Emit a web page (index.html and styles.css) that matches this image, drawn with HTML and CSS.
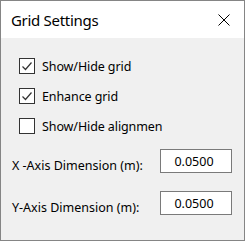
FILE: index.html
```html
<!DOCTYPE html>
<html lang="en">
<head>
    <meta charset="UTF-8">
    <meta name="viewport" content="width=device-width, initial-scale=1.0">
    <title>Grid Settings</title>
    <link rel="stylesheet" href="styles.css">
</head>
<body>
    <div class="window">
        <div class="titlebar">
            <span class="title">Grid Settings</span>
            <svg class="close" width="12" height="12" viewBox="0 0 12 12">
                <path d="M0.5 0.5 L11.5 11.5 M11.5 0.5 L0.5 11.5" stroke="#000" stroke-width="1" fill="none"/>
            </svg>
        </div>
        <div class="content">
            <div class="checks">
                <label class="check">
                    <span class="box">
                        <svg width="14" height="14" viewBox="0 0 14 14"><path d="M2.5 7.5 L5.5 10.5 L11.5 3.5" stroke="#333" stroke-width="1.2" fill="none"/></svg>
                    </span>
                    Show/Hide grid
                </label>
                <label class="check">
                    <span class="box">
                        <svg width="14" height="14" viewBox="0 0 14 14"><path d="M2.5 7.5 L5.5 10.5 L11.5 3.5" stroke="#333" stroke-width="1.2" fill="none"/></svg>
                    </span>
                    Enhance grid
                </label>
                <label class="check">
                    <span class="box"></span>
                    Show/Hide alignmen
                </label>
            </div>
            <div class="fields">
                <div class="field">
                    <span class="field-label">X -Axis Dimension (m):</span>
                    <span class="input">0.0500</span>
                </div>
                <div class="field">
                    <span class="field-label">Y-Axis Dimension (m):</span>
                    <span class="input">0.0500</span>
                </div>
            </div>
        </div>
    </div>
</body>
</html>
```

FILE: styles.css
```css
body {
    margin: 0;
    padding: 0;
    font-family: 'Noto Sans', 'Liberation Sans', sans-serif;
    color: #000;
    background-color: #f0f0f0;
}
.window {
    width: 245px;
    height: 241px;
    box-sizing: border-box;
    border: 1px solid #858585;
    background-color: #f0f0f0;
    display: flex;
    flex-direction: column;
}
.titlebar {
    height: 37px;
    background-color: #fff;
    display: flex;
    align-items: center;
    justify-content: space-between;
    padding: 0 14px 0 10px;
}
.title {
    font-size: 15px;
    letter-spacing: -0.3px;
}
.close {
    display: block;
}
.content {
    padding: 20px 12px 0 11px;
}
.checks {
    display: flex;
    flex-direction: column;
    gap: 14px;
    margin-left: 7px;
}
.check {
    display: flex;
    align-items: center;
    gap: 7px;
    height: 16px;
    font-size: 12.5px;
    letter-spacing: -0.1px;
}
.box {
    width: 16px;
    height: 16px;
    box-sizing: border-box;
    border: 1px solid #333;
    background-color: #fff;
    display: flex;
    align-items: center;
    justify-content: center;
}
.box svg {
    display: block;
}
.fields {
    display: flex;
    flex-direction: column;
    gap: 16px;
    margin-top: 14px;
}
.field {
    display: flex;
    align-items: center;
    justify-content: space-between;
    font-size: 12.5px;
}
.field-label {
    margin-top: 9px;
}
.input {
    width: 72px;
    height: 24px;
    box-sizing: border-box;
    border: 1px solid #7a7a7a;
    background-color: #fff;
    display: flex;
    align-items: center;
    justify-content: center;
    padding-right: 4px;
}
```
